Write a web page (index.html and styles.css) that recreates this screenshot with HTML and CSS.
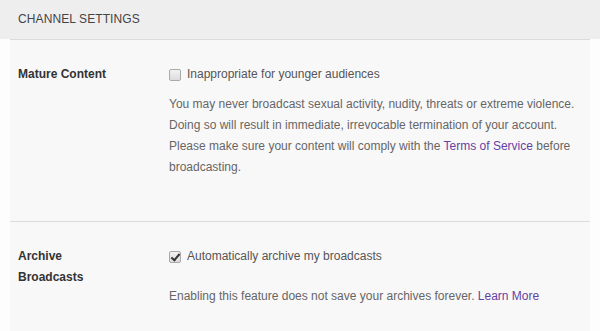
FILE: index.html
```html
<!DOCTYPE html>
<html lang="en">
  <head>
    <meta charset="UTF-8" />
    <meta name="viewport" content="width=device-width, initial-scale=1.0" />
    <link rel="stylesheet" href="styles.css">
    <title>Channel Settings</title>
  </head>
  <body>
    <div id="settings-header">
      <h2>Channel Settings</h2>
    </div>
    <div id="settings-card">
      <div class="setting-row mature-row">
        <div class="setting-label">Mature Content</div>
        <div class="setting-control">
          <label class="check">
            <input type="checkbox" />
            <span>Inappropriate for younger audiences</span>
          </label>
          <p class="help">
            You may never broadcast sexual activity, nudity, threats or extreme violence.<br />
            Doing so will result in immediate, irrevocable termination of your account.<br />
            Please make sure your content will comply with the <a href="#">Terms of Service</a> before<br />
            broadcasting.
          </p>
        </div>
      </div>
      <div class="setting-row archive-row">
        <div class="setting-label">Archive<br />Broadcasts</div>
        <div class="setting-control">
          <label class="check">
            <input type="checkbox" checked />
            <span>Automatically archive my broadcasts</span>
          </label>
          <p class="help">
            Enabling this feature does not save your archives forever. <a href="#">Learn More</a>
          </p>
        </div>
      </div>
    </div>
  </body>
</html>
```

FILE: styles.css
```css
body {
  margin: 0;
  background-color: #fdfdfd;
  font-family: "Liberation Sans", Arial, sans-serif;
  font-size: 12px;
  line-height: 21px;
  color: #666;
}

#settings-header {
  background-color: #efeeef;
  height: 39px;
  padding: 0 18px;
  display: flex;
  align-items: center;
}

#settings-header h2 {
  margin: 0;
  font-size: 12px;
  font-weight: normal;
  text-transform: uppercase;
  letter-spacing: 0.1px;
  color: #444;
}

#settings-card {
  margin: 0 10px;
  background-color: #f9f8f9;
  border-top: 1px solid #dcdbdc;
}

.setting-row {
  display: flex;
  padding: 24px 8px 0 8px;
}

.mature-row {
  height: 157px;
  border-bottom: 1px solid #dcdbdc;
}

.archive-row {
  height: 86px;
}

.setting-label {
  width: 151px;
  font-weight: bold;
  color: #333;
}

.setting-control {
  flex: 1;
}

.check {
  display: flex;
  align-items: center;
  gap: 6px;
  color: #555;
}

.check input {
  appearance: none;
  -webkit-appearance: none;
  margin: 0;
  width: 12px;
  height: 12px;
  border: 1px solid #a9a9a9;
  border-radius: 2px;
  background: linear-gradient(#f2f2f2, #dcdcdc);
  position: relative;
}

.check input:checked::after {
  content: "";
  position: absolute;
  left: 3px;
  top: 0px;
  width: 3px;
  height: 7px;
  border: solid #333;
  border-width: 0 2px 2px 0;
  transform: rotate(40deg);
}

.help {
  margin: 9px 0 0 0;
  white-space: nowrap;
}

.archive-row .help {
  margin-top: 19px;
}

a {
  color: #6441a4;
  text-decoration: none;
}
```
